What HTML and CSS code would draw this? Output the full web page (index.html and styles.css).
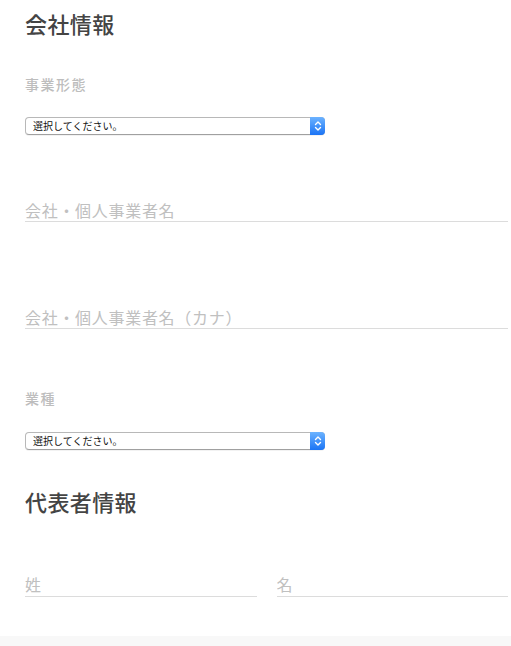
FILE: index.html
```html
<!DOCTYPE html>
<html lang="ja">
<head>
<meta charset="utf-8">
<title>会社情報</title>
<link rel="stylesheet" href="styles.css">
</head>
<body>
<main class="form">
  <h2 class="heading heading-first">会社情報</h2>
  <label class="label label-type">事業形態</label>
  <div class="select-wrap select-first">
    <select class="select"><option>選択してください。</option></select>
    <span class="select-btn">
      <svg width="8" height="12" viewBox="0 0 8 12"><path d="M1.5 4.5 L4 2 L6.5 4.5 M1.5 7.5 L4 10 L6.5 7.5" fill="none" stroke="#fff" stroke-width="1.4" stroke-linecap="round" stroke-linejoin="round"/></svg>
    </span>
  </div>
  <input class="field field-name" type="text" placeholder="会社・個人事業者名">
  <input class="field field-kana" type="text" placeholder="会社・個人事業者名（カナ）">
  <label class="label label-industry">業種</label>
  <div class="select-wrap select-second">
    <select class="select"><option>選択してください。</option></select>
    <span class="select-btn">
      <svg width="8" height="12" viewBox="0 0 8 12"><path d="M1.5 4.5 L4 2 L6.5 4.5 M1.5 7.5 L4 10 L6.5 7.5" fill="none" stroke="#fff" stroke-width="1.4" stroke-linecap="round" stroke-linejoin="round"/></svg>
    </span>
  </div>
  <h2 class="heading heading-second">代表者情報</h2>
  <div class="name-row">
    <input class="field" type="text" placeholder="姓">
    <input class="field" type="text" placeholder="名">
  </div>
</main>
<footer class="footer"></footer>
</body>
</html>
```
FILE: styles.css
```css
html, body {
  margin: 0;
  padding: 0;
  background: #fff;
}
body {
  font-family: "Noto Sans CJK JP", "Noto Sans", sans-serif;
}
.form {
  display: flex;
  flex-direction: column;
  align-items: flex-start;
  padding: 0 3px 0 25px;
}
.heading {
  margin: 0;
  font-size: 22px;
  line-height: 30px;
  font-weight: 500;
  color: #444;
  letter-spacing: 0.4px;
}
.heading-first { margin-top: 8px; }
.heading-second { margin-top: 36px; }
.label {
  display: block;
  font-size: 14px;
  line-height: 20px;
  font-weight: 500;
  color: #bdbdbd;
  letter-spacing: 1.5px;
}
.label-type { margin-top: 36px; }
.label-industry { margin-top: 59px; }
.select-wrap {
  position: relative;
  width: 300px;
  height: 18px;
}
.select-first { margin-top: 23px; }
.select-second { margin-top: 24px; }
.select {
  -webkit-appearance: none;
  appearance: none;
  display: block;
  box-sizing: border-box;
  width: 100%;
  height: 18px;
  margin: 0;
  padding: 0 0 0 7px;
  border: 1px solid #b8b8b8;
  border-bottom-color: #a0a0a0;
  border-radius: 4px;
  background: #fff;
  font-family: "Noto Sans CJK JP", sans-serif;
  font-size: 10px;
  line-height: 16px;
  color: #111;
  box-shadow: 0 1px 0 rgba(0,0,0,0.05);
}
.select-btn {
  position: absolute;
  top: 0;
  right: 0;
  width: 15px;
  height: 18px;
  border-radius: 0 4px 4px 0;
  background: linear-gradient(#6cb3ff, #1b74f5);
  display: flex;
  align-items: center;
  justify-content: center;
  pointer-events: none;
}
.field {
  box-sizing: border-box;
  display: block;
  width: 100%;
  height: 27px;
  margin: 0;
  padding: 3px 0 0;
  border: 0;
  border-bottom: 1px solid #dcdcdc;
  background: transparent;
  font-family: "Noto Sans CJK JP", sans-serif;
  font-size: 16px;
  color: #333;
  outline: none;
}
.field::placeholder {
  color: #c0c0c0;
  letter-spacing: 0.7px;
}
.field-name { margin-top: 60px; }
.field-kana { margin-top: 80px; }
.name-row {
  align-self: stretch;
  display: grid;
  grid-template-columns: 1fr 1fr;
  gap: 20px;
  margin-top: 53px;
}
.name-row .field {
  height: 28px;
}
.footer {
  margin-top: 39px;
  height: 40px;
  background: #f8f8f8;
}
```
